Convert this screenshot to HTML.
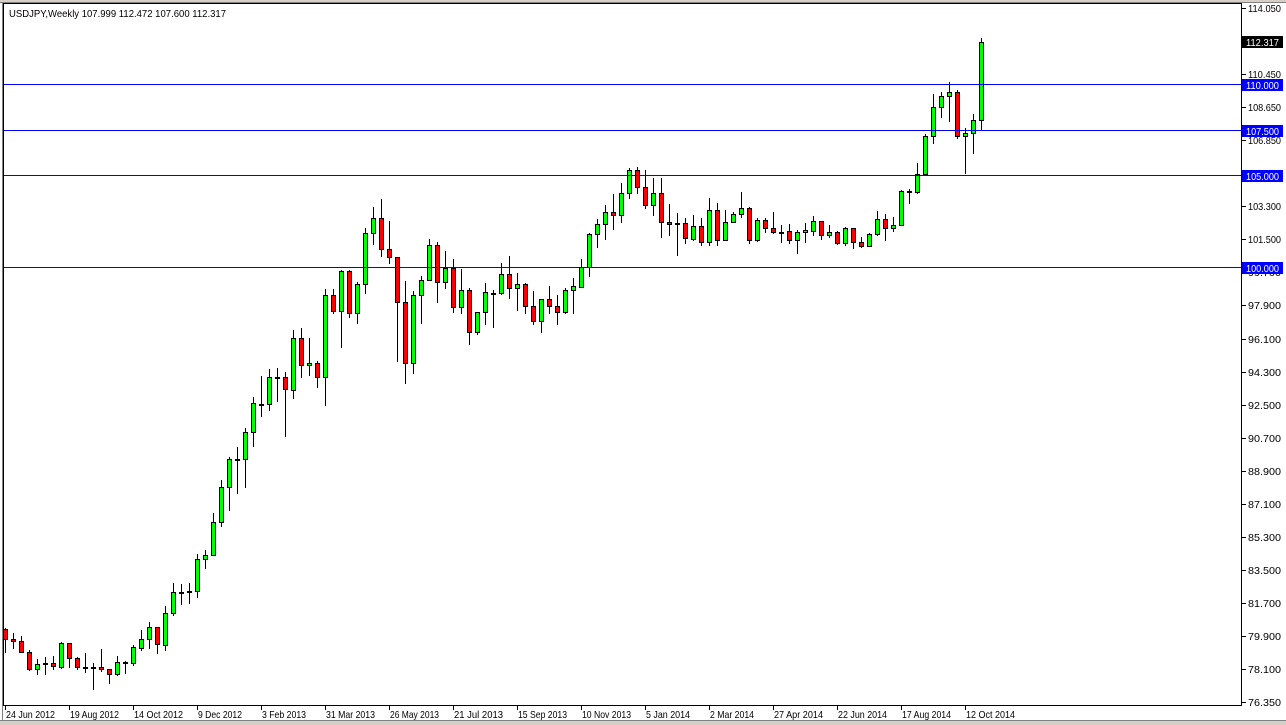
<!DOCTYPE html>
<html><head><meta charset="utf-8"><style>
html,body{margin:0;padding:0;background:#fff;}
body{width:1286px;height:725px;overflow:hidden;position:relative;font-family:"Liberation Sans",Tahoma,sans-serif;}
svg{position:absolute;left:0;top:0;}
text{font-family:"Liberation Sans",Tahoma,sans-serif;font-size:10.5px;}
</style></head><body>
<svg id="s" width="1286" height="725" xmlns="http://www.w3.org/2000/svg">
<rect x="0" y="0" width="1286" height="725" fill="#fff"/>
<rect x="0" y="0" width="1286" height="2" fill="#d4d0c8"/>
<rect x="0" y="721" width="1286" height="4" fill="#d4d0c8"/>
<line x1="0" y1="720.5" x2="1286" y2="720.5" stroke="#808080"/>
<line x1="0" y1="2.5" x2="1286" y2="2.5" stroke="#808080"/>
<line x1="2.5" y1="2" x2="2.5" y2="721" stroke="#808080"/>
<line x1="3.5" y1="3" x2="3.5" y2="706" stroke="#000"/>
<line x1="3" y1="3.5" x2="1242" y2="3.5" stroke="#000"/>
<line x1="1241.5" y1="3" x2="1241.5" y2="706" stroke="#000"/>
<line x1="3" y1="705.5" x2="1242" y2="705.5" stroke="#000"/>
<text x="9" y="17" fill="#000" textLength="217" lengthAdjust="spacingAndGlyphs">USDJPY,Weekly  107.999 112.472 107.600 112.317</text>
<g id="g"></g>
</svg>
<script>
var C=[
[629,639,628,652],[639,641,633,648],[641,652,636,652],[652,669,650,670],[669,664,659,674],[663,663,657,674],[663,666,656,669],[667,643,642,668],[643,658,643,667],[658,667,657,669],
[667,667,653,672],[667,667,663,689],[667,669,649,671],[669,674,669,683],[674,662,656,675],[662,662,661,673],[663,647,645,665],[648,639,630,650],[639,627,622,648],[627,644,627,653],
[645,613,606,650],[613,592,583,615],[592,592,584,604],[591,591,583,603],[591,559,554,597],[559,555,550,568],[555,522,513,555],[522,487,480,526],[487,459,457,510],[459,459,447,493],
[459,432,428,487],[432,403,397,446],[404,404,376,416],[404,377,369,410],[377,377,368,401],[377,389,372,436],[390,338,330,398],[338,365,328,377],[365,363,338,375],[363,377,361,387],
[377,295,289,405],[295,311,289,313],[311,271,270,347],[271,313,270,317],[313,284,282,323],[284,233,228,293],[233,218,207,244],[218,249,199,256],[249,257,221,263],[257,302,257,361],
[302,363,281,383],[363,295,291,373],[295,280,276,323],[280,245,239,280],[245,282,242,302],[282,268,251,288],[268,307,259,312],[307,290,269,313],[290,332,288,344],[332,312,312,334],
[312,292,283,324],[293,293,290,327],[293,274,263,294],[274,288,256,298],[288,284,273,310],[284,306,283,313],[306,321,291,324],[321,299,299,332],[299,306,286,313],[306,312,295,324],
[312,290,288,313],[290,286,278,313],[287,267,259,287],[267,234,233,276],[234,224,219,247],[224,212,205,239],[212,215,194,229],[215,193,183,222],[193,170,168,198],[170,187,167,193],
[187,205,170,208],[205,193,178,215],[193,222,178,237],[222,224,204,235],[223,223,213,255],[223,238,218,243],[239,226,215,240],[226,242,218,245],[242,210,198,245],[210,240,203,245],
[240,222,210,240],[222,214,212,222],[214,208,192,217],[208,240,207,243],[240,220,218,241],[220,228,218,232],[228,232,212,233],[232,232,225,242],[231,240,224,243],[240,232,230,253],
[232,230,223,242],[231,221,216,235],[221,235,221,239],[235,232,225,237],[232,243,231,244],[243,228,227,245],[228,242,228,248],[242,246,237,247],[246,234,233,246],[234,219,211,235],
[219,228,214,240],[228,225,217,231],[225,191,190,225],[191,191,189,203],[192,174,163,193],[174,136,134,174],[136,107,94,143],[107,96,92,117],[96,92,82,121],[92,136,90,138],
[136,133,128,173],[133,120,114,153],[120,42,38,129]];
var h='';
for(var i=0;i<C.length;i++){
 var c=C[i],x=5+8*i,o=c[0],cl=c[1];
 h+='<line x1="'+(x+0.5)+'" y1="'+c[2]+'" x2="'+(x+0.5)+'" y2="'+(c[3]+1)+'" stroke="#000"/>';
 if(Math.abs(o-cl)<2){h+='<rect x="'+(x-2)+'" y="'+(Math.min(o,cl))+'" width="5" height="2" fill="#000"/>';}
 else{var t=Math.min(o,cl),b=Math.max(o,cl);
 h+='<rect x="'+(x-1.5)+'" y="'+(t+0.5)+'" width="4" height="'+(b-t)+'" fill="'+(cl<o?'#00ff00':'#ff0000')+'" stroke="#000"/>';}
}
[84,130,175,267].forEach(function(y){h+='<line x1="4" y1="'+(y+0.5)+'" x2="1241" y2="'+(y+0.5)+'" stroke="#0000ff"/>';});
var labs=[[114.05,8],[110.45,74],[108.65,107],[106.85,140],[103.3,206],[101.5,239],[99.7,272],[97.9,305],[96.1,339],[94.3,372],[92.5,405],[90.7,438],[88.9,471],[87.1,504],[85.3,537],[83.5,570],[81.7,603],[79.9,636],[78.1,669],[76.35,702]];
labs.forEach(function(l){h+='<line x1="1242" y1="'+(l[1]+0.5)+'" x2="1246" y2="'+(l[1]+0.5)+'" stroke="#000"/><text x="1248" y="'+(l[1]+4)+'" fill="#000" textLength="33" lengthAdjust="spacingAndGlyphs">'+l[0].toFixed(3)+'</text>';});
[[110,84,'#0000ff'],[107.5,130,'#0000ff'],[105,175,'#0000ff'],[100,267,'#0000ff'],[112.317,41,'#000']].forEach(function(b){
 h+='<rect x="1242" y="'+(b[1]-5)+'" width="41" height="12" fill="'+b[2]+'"/><text x="1246" y="'+(b[1]+5)+'" fill="#fff" textLength="33" lengthAdjust="spacingAndGlyphs">'+b[0].toFixed(3)+'</text>';});
var d=['24 Jun 2012','19 Aug 2012','14 Oct 2012','9 Dec 2012','3 Feb 2013','31 Mar 2013','26 May 2013','21 Jul 2013','15 Sep 2013','10 Nov 2013','5 Jan 2014','2 Mar 2014','27 Apr 2014','22 Jun 2014','17 Aug 2014','12 Oct 2014'];
d.forEach(function(s,k){var x=5+64*k;var w=s.length==11?49:44;h+='<line x1="'+(x+0.5)+'" y1="706" x2="'+(x+0.5)+'" y2="710" stroke="#000"/><text x="'+(x+1)+'" y="718" fill="#000" textLength="'+w+'" lengthAdjust="spacingAndGlyphs">'+s+'</text>';});
document.getElementById('g').innerHTML=h;
</script>
</body></html>
